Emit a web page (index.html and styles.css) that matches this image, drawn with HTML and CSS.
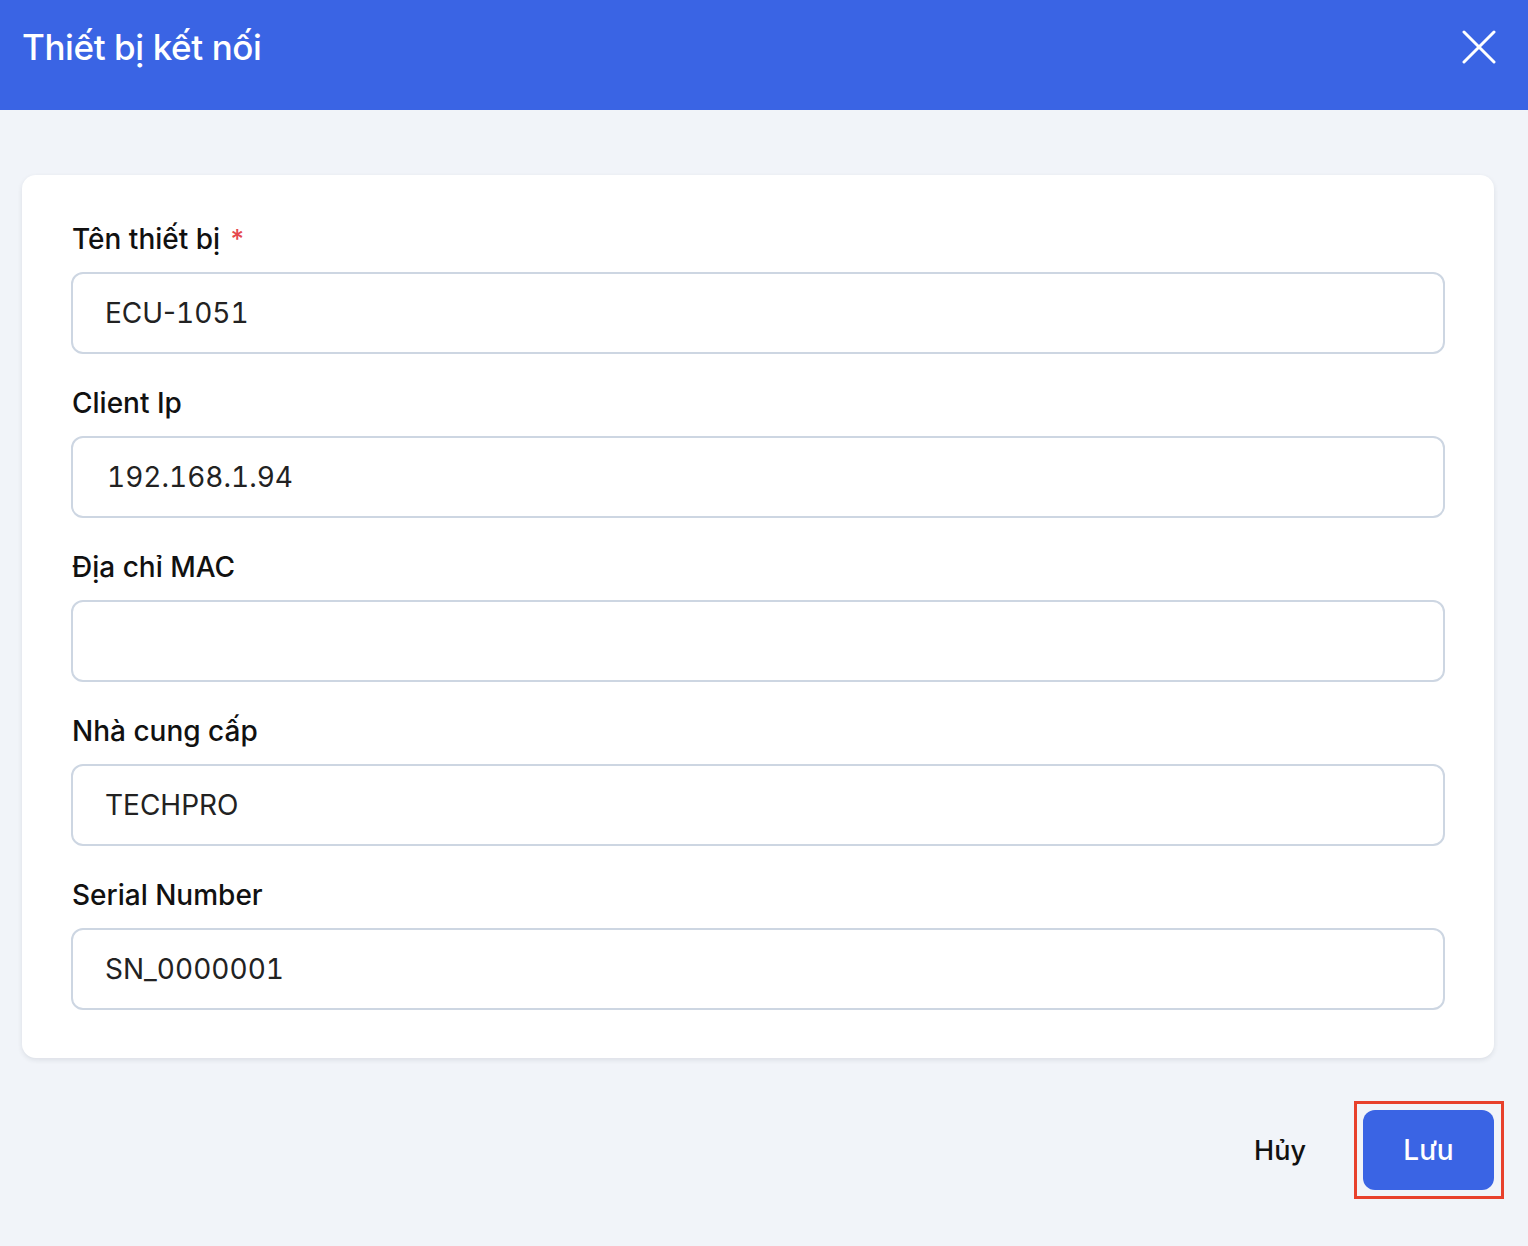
FILE: index.html
```html
<!DOCTYPE html>
<html lang="vi">
<head>
<meta charset="utf-8">
<title>Thiết bị kết nối</title>
<link rel="stylesheet" href="styles.css">
</head>
<body>
<header class="topbar">
  <h1 class="title">Thiết bị kết nối</h1>
  <button class="close" aria-label="Đóng">
    <svg width="34" height="34" viewBox="0 0 34 34"><path d="M2 2 L32 32 M32 2 L2 32" stroke="#fff" stroke-width="3" stroke-linecap="round" fill="none"/></svg>
  </button>
</header>
<main class="content">
  <section class="card">
    <div class="field">
      <label class="label">Tên thiết bị <span class="req">*</span></label>
      <div class="input">ECU-<span class="num">1051</span></div>
    </div>
    <div class="field">
      <label class="label">Client Ip</label>
      <div class="input ip"><span class="num">192.168.1.94</span></div>
    </div>
    <div class="field">
      <label class="label">Địa chỉ MAC</label>
      <div class="input"></div>
    </div>
    <div class="field">
      <label class="label">Nhà cung cấp</label>
      <div class="input">TECHPRO</div>
    </div>
    <div class="field">
      <label class="label">Serial Number</label>
      <div class="input">SN_<span class="num">0000001</span></div>
    </div>
  </section>
  <div class="actions">
    <button class="btn-cancel">Hủy</button>
    <span class="focus-ring"><button class="btn-save">Lưu</button></span>
  </div>
</main>
</body>
</html>
```

FILE: styles.css
```css
* { box-sizing: border-box; }
html, body { margin: 0; padding: 0; }
body {
  background: #f1f4f9;
  font-family: Inter, "Noto Sans", "Liberation Sans", sans-serif;
  height: 1246px;
  overflow: hidden;
}
.topbar {
  height: 110px;
  background: #3a64e4;
  display: flex;
  align-items: center;
  justify-content: space-between;
  padding: 0 32px 16px 22px;
}
.title {
  margin: 0;
  color: #fff;
  font-size: 35px;
  font-weight: 500;
  letter-spacing: -0.4px;
}
.close {
  background: none;
  border: 0;
  padding: 0;
  width: 34px;
  height: 34px;
  display: flex;
}
.content {
  padding: 65px 34px 0 22px;
}
.card {
  background: #fff;
  border-radius: 14px;
  padding: 47px 49px 48px 49px;
  box-shadow: 0 2px 5px rgba(30, 41, 59, 0.10);
  display: flex;
  flex-direction: column;
  gap: 32px;
}
.field {
  display: flex;
  flex-direction: column;
  gap: 16px;
}
.label {
  font-size: 28px;
  line-height: 34px;
  font-weight: 500;
  color: #111;
  padding-left: 1px;
}
.req {
  color: #e5484d;
  font-size: 26px;
  vertical-align: top;
  margin-left: 3px;
}
.input {
  height: 82px;
  border: 2px solid #cdd6e2;
  border-radius: 12px;
  padding: 0 32px;
  display: flex;
  align-items: center;
  font-size: 28px;
  color: #222;
  white-space: pre;
}
.num {
  font-variant-numeric: tabular-nums;
}
.input.ip { padding-left: 34px; }
.actions {
  display: flex;
  justify-content: flex-end;
  align-items: center;
  margin-top: 43px;
  margin-right: -10px;
  gap: 24px;
}
.btn-cancel {
  background: none;
  border: 0;
  height: 80px;
  padding: 0 24px;
  font-family: inherit;
  font-size: 27px;
  font-weight: 500;
  color: #111;
}
.focus-ring {
  display: flex;
  border: 3px solid #e8412c;
  padding: 6px 7px 6px 6px;
}
.btn-save {
  width: 131px;
  height: 80px;
  border: 0;
  border-radius: 12px;
  background: #3a64e4;
  color: #fff;
  font-family: inherit;
  font-size: 28px;
  font-weight: 500;
}
```
